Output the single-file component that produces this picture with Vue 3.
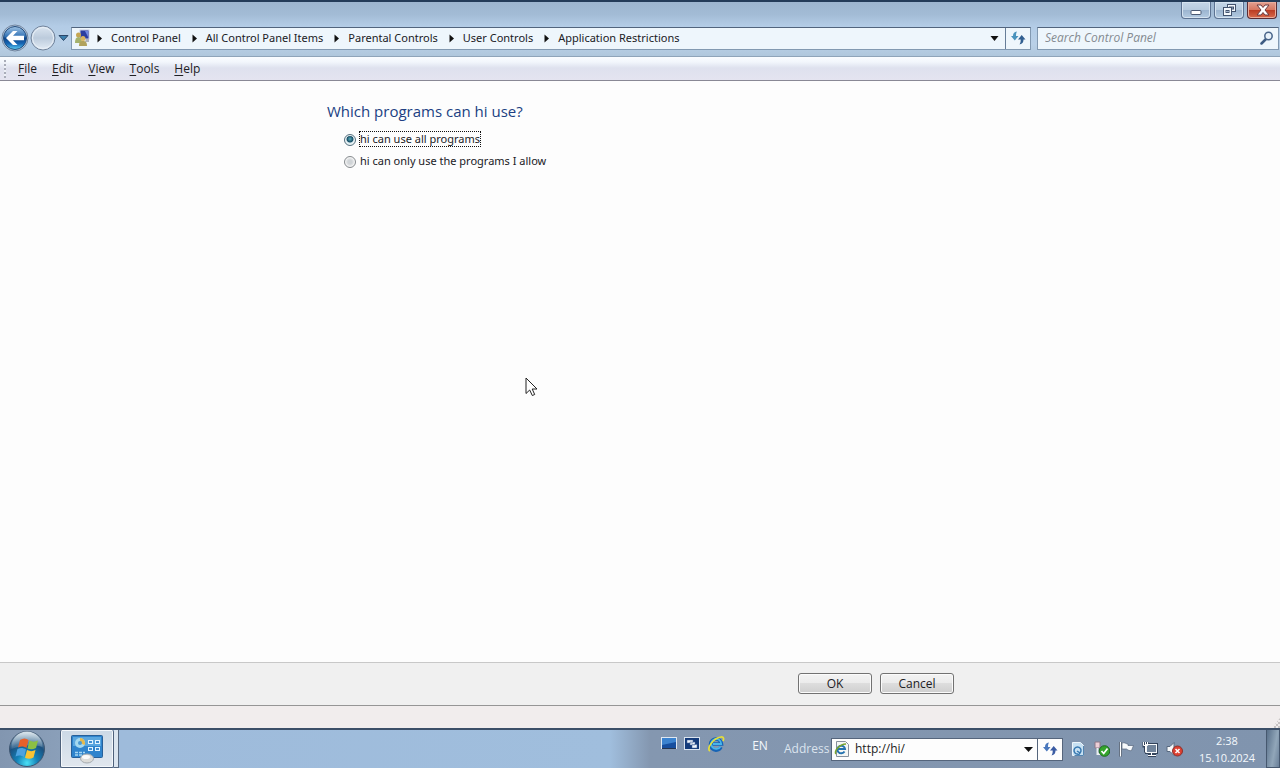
<script setup>
import { ref } from 'vue'

const crumbs = ['Control Panel', 'All Control Panel Items', 'Parental Controls', 'User Controls', 'Application Restrictions']
const menus = ['File', 'Edit', 'View', 'Tools', 'Help']
const access = ref('all')
const query = ref('')
const address = ref('http://hi/')
</script>

<template>
  <div class="screen">
    <header class="glass">
      <div class="caption">
        <button class="cap" aria-label="Minimize">
          <svg width="28" height="16" viewBox="0 0 28 16"><rect x="9" y="8.5" width="10" height="4" rx="1" fill="#fff" stroke="#4b5a74" /></svg>
        </button>
        <button class="cap" aria-label="Restore">
          <svg width="28" height="16" viewBox="0 0 28 16" fill="#f4f8fc" stroke="#43536e">
            <rect x="12.5" y="2.5" width="8" height="7" /><rect x="14.5" y="5" width="4" height="2" fill="#9fb2cb" />
            <rect x="8.500" y="5.500" width="8" height="8" /><rect x="11" y="8.500" width="3" height="2" fill="#9fb2cb" />
          </svg>
        </button>
        <button class="cap close" aria-label="Close">
          <svg width="28" height="16" viewBox="0 0 28 16"><path d="M9 3h4l2 2.500 2-2.500h4l-4 5 4 5h-4l-2-2.500-2 2.500H9l4-5z" fill="#fff" stroke="#6b3a40" /></svg>
        </button>
      </div>
      <div class="nav">
        <div class="travel">
          <button class="plain" aria-label="Back">
            <svg width="28" height="28" viewBox="0 0 28 28">
              <defs>
                <linearGradient id="back" x1="0" y1="0" x2="0" y2="1"><stop offset="0" stop-color="#9fc3e4" /><stop offset=".45" stop-color="#2f70b4" /><stop offset=".5" stop-color="#0c4389" /><stop offset=".75" stop-color="#1768b6" /><stop offset="1" stop-color="#5fd0f5" /></linearGradient>
              </defs>
              <circle cx="14" cy="14" r="13" fill="#c3d4e6" stroke="#71859f" />
              <circle cx="14" cy="14" r="11.500" fill="url(#back)" stroke="#234c7c" />
              <path d="M5 14l7-7h4.500l-4.500 4.700H23v4.600H12L16.500 21H12z" fill="#fff" />
            </svg>
          </button>
          <button class="plain" aria-label="Forward">
            <svg width="28" height="28" viewBox="0 0 28 28">
              <defs>
                <linearGradient id="fwd" x1="0" y1="0" x2="0" y2="1"><stop offset="0" stop-color="#dce6f1" /><stop offset=".5" stop-color="#bccbdc" /><stop offset="1" stop-color="#e4edf6" /></linearGradient>
              </defs>
              <circle cx="14" cy="14" r="12" fill="url(#fwd)" stroke="#71839b" />
              <circle cx="14" cy="14" r="10.500" fill="none" stroke="#e9f0f7" />
            </svg>
          </button>
          <button class="plain recent" aria-label="Recent pages">
            <svg width="11" height="8" viewBox="0 0 11 8"><path d="M1 1.500h9L5.500 6.500z" fill="#3a7fae" stroke="#2b4668" /></svg>
          </button>
        </div>
        <div class="path">
          <svg class="place" width="18" height="18" viewBox="0 0 18 18">
            <rect x="6" y="1" width="9" height="9" fill="#2c3d9f" stroke="#c5cbe3" /><path d="M11 2h3v6z" fill="#7188e0" />
            <path d="M12 10h3v3h-4z" fill="#b0b3bd" />
            <circle cx="4.500" cy="6" r="2.500" fill="#c5a653" /><path d="M1 14c0-4 1-6 3.500-6S8 10 8 14z" fill="#a5b26c" />
            <circle cx="9" cy="9.500" r="2.500" fill="#d9b45f" /><path d="M5 17c0-4 1.500-5 4-5s4 1 4 5z" fill="#b1a35e" />
          </svg>
          <nav class="crumbs">
            <template v-for="c in crumbs" :key="c">
              <svg class="arrow" width="25" height="9" viewBox="0 0 25 9"><path d="M11.500 0.500l4.500 4-4.500 4z" fill="#111" /></svg>
              <a href="#">{{ c }}</a>
            </template>
          </nav>
          <button class="plain drop" aria-label="Previous locations">
            <svg width="9" height="5" viewBox="0 0 9 5"><path d="M0.500 0h8L4.500 5z" fill="#111" /></svg>
          </button>
          <button class="plain refresh" aria-label="Refresh">
            <svg width="16" height="16" viewBox="0 0 16 16" fill="#4a93bd"><path d="M7 1.500C4 2 3 3.500 3 6H1l3.800 4.500L8.500 6H6C6 4 6.200 3 7 1.500z" /><path d="M9.500 14.500c3.200-.8 4-2.500 4-5h2L11.700 5 8 9.500h2.700c0 2-.2 3.500-1.200 5z" fill="#315f91" /></svg>
          </button>
        </div>
        <div class="search">
          <input v-model="query" type="search" aria-label="Search Control Panel" placeholder="Search Control Panel">
          <svg width="14" height="14" viewBox="0 0 14 14" fill="none"><path d="M1.500 12.500l5-5" stroke="#3e5c83" stroke-width="2.500" stroke-linecap="round" /><circle cx="8.500" cy="5" r="3.700" fill="#e8f2fa" stroke="#49658a" stroke-width="1.500" /></svg>
        </div>
      </div>
    </header>

    <div class="menubar">
      <span class="grip"></span>
      <button v-for="m in menus" :key="m" class="plain"><u>{{ m[0] }}</u>{{ m.slice(1) }}</button>
    </div>

    <main class="content">
      <div class="column">
        <h1>Which programs can hi use?</h1>
        <div class="choice">
          <input id="all" v-model="access" type="radio" name="access" value="all">
          <label for="all" :class="{ focused: access === 'all' }">hi can use all programs</label>
        </div>
        <div class="choice">
          <input id="some" v-model="access" type="radio" name="access" value="some">
          <label for="some" :class="{ focused: access === 'some' }">hi can only use the programs I allow</label>
        </div>
      </div>
      <svg class="pointer" width="13" height="20" viewBox="0 0 13 20"><path d="M1 1v15.500l3.700-3.500 2.600 5.500 2.400-1-2.500-5.500H12z" fill="#fff" stroke="#222" /></svg>
    </main>

    <footer class="actions">
      <div class="column">
        <button class="push">OK</button>
        <button class="push">Cancel</button>
      </div>
    </footer>
    <div class="status"><span class="sizer"></span></div>

    <div class="taskbar">
      <button class="plain orb" aria-label="Start">
        <svg width="38" height="38" viewBox="0 0 38 38">
          <defs>
            <radialGradient id="orb" cx=".5" cy=".9" r=".85"><stop offset="0" stop-color="#4be0f5" /><stop offset=".35" stop-color="#1482b8" /><stop offset=".7" stop-color="#1b5180" /><stop offset="1" stop-color="#7f9bb4" /></radialGradient>
            <linearGradient id="shine" x1="0" y1="0" x2="0" y2="1"><stop offset="0" stop-color="#eef6fa" stop-opacity=".85" /><stop offset="1" stop-color="#a4bccb" stop-opacity=".2" /></linearGradient>
          </defs>
          <circle cx="19" cy="19" r="17.500" fill="url(#orb)" stroke="#3d5570" />
          <path d="M3.500 17a15.500 15.500 0 0 1 31 0c-8-3-22-2-31 2z" fill="url(#shine)" />
          <path d="M12 10c3-2 6-2 8.500 0L18.500 18c-3-2-5.500-2-8.500-.5z" fill="#e8602b" />
          <path d="M21.500 10.500c3 1.500 5.500 1.500 8.500 0L28 18c-3 1.500-5.500 1.500-8.500.5z" fill="#8cc044" />
          <path d="M9.500 19c3-1.500 5.500-1.500 8.500.5L16 27c-3-2-5.500-2-8.500-.5z" fill="#4da2e0" />
          <path d="M19 20c3 1.500 5.500 1.500 8.500 0L25.500 27.500c-3 1.500-5.500 1.500-8.500.3z" fill="#fac333" />
        </svg>
      </button>
      <button class="task" aria-label="Control Panel">
        <svg width="34" height="30" viewBox="0 0 34 30">
          <rect x="1.500" y="1.500" width="31" height="22" rx="1" fill="#2f84cd" stroke="#276099" />
          <rect x="3" y="3" width="28" height="9" fill="#5ba7df" />
          <circle cx="10" cy="9" r="5" fill="#a5d9ef" /><path d="M10 9V4a5 5 0 0 1 4.500 7z" fill="#e6b94b" /><circle cx="10" cy="9" r="2" fill="#4b99d1" />
          <path d="M5 18.500h10M5 21h7" stroke="#a7d7f3" stroke-width="1.500" stroke-dasharray="3 1" />
          <g fill="#408ed0" stroke="#e2f4ff"><rect x="18.500" y="6.500" width="4" height="3" /><rect x="25.500" y="6.500" width="4" height="3" /><rect x="18.500" y="13.500" width="4" height="3" /><rect x="25.500" y="13.500" width="4" height="3" /></g>
          <ellipse cx="17" cy="24.500" rx="6.500" ry="4.500" fill="#dcdcd9" stroke="#a3a9ae" /><ellipse cx="16" cy="23" rx="4" ry="2" fill="#fafafa" />
        </svg>
      </button>
      <span class="stack"></span>

      <div class="launch">
        <button class="plain" aria-label="Show desktop">
          <svg width="16" height="16" viewBox="0 0 16 16"><rect x=".5" y="1.500" width="15" height="11" fill="#174f9f" stroke="#dfe8f2" /><path d="M1 2h14v4L1 9z" fill="#3c83cf" /><path d="M1 12.500h14" stroke="#253650" /></svg>
        </button>
        <button class="plain" aria-label="Switch windows">
          <svg width="16" height="16" viewBox="0 0 16 16"><rect x=".5" y="1.500" width="15" height="12" fill="#143b7a" stroke="#dae4ef" /><path d="M3 4h6v3H3zM6 6h5v3H6zM8 8.500h5V12H8z" fill="#f1f6fb" stroke="#46679a" stroke-width=".5" /></svg>
        </button>
        <button class="plain" aria-label="Internet Explorer">
          <svg width="18" height="16" viewBox="0 0 18 16" fill="none"><path d="M14 11A5.500 5.500 0 1 1 14.500 8H5" stroke="#1764b5" stroke-width="3.500" /><path d="M13.500 10.500A5 5 0 1 1 14.200 8H6" stroke="#48b5ea" stroke-width="1.800" /><path d="M3 15C-1 13 6 2 14 1c3-.3 3 2 2 4" stroke="#e6df38" stroke-width="1.700" /></svg>
        </button>
      </div>
      <button class="plain lang">EN</button>
      <label class="addrlabel" for="address">Address</label>
      <div class="address">
        <svg width="16" height="16" viewBox="0 0 16 16" fill="none"><path d="M2.500.5h9l3 3v12h-12z" fill="#f5f7f5" stroke="#87919d" /><path d="M10.500 10.500A3.800 3.800 0 1 1 11 8H4" stroke="#2472b0" stroke-width="2" /><path d="M2 13C-.5 11 5 3 12 3" stroke="#79a52e" stroke-width="1.500" /></svg>
        <input id="address" v-model="address" type="text">
        <button class="plain down" aria-label="Show addresses"><svg width="9" height="5" viewBox="0 0 9 5"><path d="M0 0h9L4.500 5z" fill="#111" /></svg></button>
        <button class="plain go" aria-label="Go">
          <svg width="16" height="16" viewBox="0 0 16 16" fill="#4a78bd"><path d="M7 1.500C4 2 3 3.500 3 6H1l3.800 4.500L8.500 6H6C6 4 6.200 3 7 1.500z" /><path d="M9.500 14.500c3.200-.8 4-2.500 4-5h2L11.700 5 8 9.500h2.700c0 2-.2 3.500-1.200 5z" fill="#3a5ba3" /></svg>
        </button>
      </div>
      <div class="tray">
        <svg width="16" height="16" viewBox="0 0 16 16"><path d="M2.500 1.500h8l3 3v10h-11z" fill="#c7e1f3" stroke="#edf5fb" /><path d="M10 12a3.500 3.500 0 1 0-2 1M7 10l3 2-2 2.500" fill="none" stroke="#3979b1" stroke-width="1.500" /><path d="M13.500 5v9.500h-9" fill="none" stroke="#5585b0" /></svg>
        <svg width="16" height="16" viewBox="0 0 16 16"><path d="M1 1h5v6H1z" fill="#edcfd7" stroke="#8b7888" /><path d="M3.500 7v6h5" fill="none" stroke="#e9edf0" stroke-width="2" /><circle cx="10.500" cy="10" r="5.300" fill="#34a52c" stroke="#1f6c22" /><path d="M7.500 10l2.200 2.500L13.500 7.500" fill="none" stroke="#fff" stroke-width="1.700" /></svg>
        <svg width="16" height="16" viewBox="0 0 16 16"><path d="M2.500 1v14.500" stroke="#34445a" stroke-width="3" /><path d="M2.500 1v14.500" stroke="#fff" stroke-width="1.500" /><path d="M4 2c3-1 4 1 6 1v1.500h5.500l-2 5c-2 1-4-1-5-1.500H4z" fill="#f6f9fb" stroke="#56667c" stroke-width=".7" /></svg>
        <svg width="16" height="16" viewBox="0 0 16 16" fill="none"><rect x="4.500" y="3.500" width="10" height="8" stroke="#33435a" stroke-width="3" /><path d="M9.500 12v2M6 14.500h8M2 1v4h3V1M3.500 5v6.500" stroke="#33435a" stroke-width="3" /><rect x="4.500" y="3.500" width="10" height="8" fill="#71849b" stroke="#f6f9fb" /><path d="M9.500 12v2M6 14.500h8M1.500 1v3.500h4V1M3.500 1v10.500" stroke="#fff" /></svg>
        <svg width="18" height="16" viewBox="0 0 18 16"><path d="M1 5.500h3l4-4v13l-4-4H1z" fill="#f7f9fb" stroke="#596a80" /><circle cx="11.500" cy="10" r="5" fill="#dd4031" stroke="#8e302b" /><path d="M9.500 8l4 4M13.500 8l-4 4" stroke="#fff" stroke-width="1.500" /></svg>
      </div>
      <button class="plain clock"><span>2:38</span><span>15.10.2024</span></button>
      <button class="peek" aria-label="Show desktop"></button>
    </div>
  </div>
</template>

<style>
body { margin: 0; }
</style>

<style scoped>
* { box-sizing: border-box; }
.screen { display: flex; flex-direction: column; min-height: 100vh; background: #fdfdfd; color: #202024; font: 12px/16px "Open Sans", "Noto Sans", sans-serif; }
button, input { font: inherit; color: inherit; }
svg { display: block; flex: none; }
.plain { border: 0; padding: 0; background: none; display: flex; align-items: center; justify-content: center; }
.column { width: 100%; max-width: 628px; margin: 0 auto; padding-left: 1px; }

.glass { border-top: 2px solid #243c59; background: linear-gradient(#9db5cf 0, #a2bbd5 12px, #b3cce6 24px, #b9d0e7 42px, #b0c7dc 100%); height: 57px; border-bottom: 1px solid #8fa4b9; }
.caption { display: flex; justify-content: flex-end; gap: 3px; height: 17px; padding-right: 3px; }
.cap { width: 30px; padding: 0; border: 1px solid #5c7292; border-top: 0; border-radius: 0 0 4px 4px; background: linear-gradient(#c5d6e8 0, #b6cade 50%, #9bb4cf 50%, #b4cbe2 100%); box-shadow: inset 0 0 0 1px #d5e3f0; display: flex; justify-content: center; }
.close { border-color: #592c35; background: linear-gradient(#e2a091 0, #d5745e 50%, #b93a22 50%, #d96a4c 100%); box-shadow: inset 0 0 0 1px #e9ad9d; }
.nav { display: flex; align-items: center; height: 30px; margin-top: 4px; padding: 0 1px; }
.travel { display: flex; align-items: center; width: 70px; }
.recent { width: 12px; }
.path { display: flex; align-items: center; flex: 1; height: 23px; border: 1px solid #8299b1; border-top-color: #51647d; background: #eef6fc; min-width: 0; }
.place { margin-left: 2px; }
.crumbs { display: flex; align-items: center; flex: 1; white-space: nowrap; margin-left: -6px; font-family: "Noto Sans", sans-serif; font-size: 11px; }
.crumbs a { color: inherit; text-decoration: none; }
.drop { width: 22px; height: 100%; }
.refresh { width: 25px; height: 100%; border-left: 1px solid #667d98; }
.search { display: flex; align-items: center; width: 242px; height: 23px; margin-left: 6px; padding: 0 4px 0 7px; border: 1px solid #8299b1; border-top-color: #51647d; background: #eef6fc; }
.search input { flex: 1; min-width: 0; padding: 0; border: 0; outline: 0; background: none; font-style: italic; appearance: none; }
.search input::placeholder { color: #858b91; opacity: 1; }

.menubar { display: flex; align-items: center; height: 24px; padding-left: 4px; gap: 15px; border-bottom: 1px solid #898895; background: linear-gradient(#fbfdff 0, #f2f6fc 5px, #dee1ee 11px, #e4e4f0 100%); }
.menubar .plain { height: 22px; }
.menubar u { text-underline-offset: 2px; }
.grip { width: 2px; height: 18px; margin-right: -3px; background: repeating-linear-gradient(#a9adb9 0 2px, #eef1f7 2px 4px); }

.content { position: relative; flex: 1; padding-top: 20px; }
h1 { margin: 0 0 9px; font-size: 15px; line-height: 20px; font-weight: 400; color: #203f82; }
.choice { display: flex; align-items: center; height: 18px; margin: 0 0 4px 17px; }
.choice input { appearance: none; width: 12px; height: 12px; margin: 1px 3px 0 0; border: 1px solid #858a8e; border-radius: 50%; background: radial-gradient(circle, #d0d4d7 0 2px, #f4f4f4 5px); box-shadow: inset 0 0 0 1px #f4f4f4; }
.choice input:checked { border-color: #54707f; background: radial-gradient(circle at 5px 4px, #5eaebd 0, #164d65 3px, #dceef3 4px); }
.choice label { border: 1px solid transparent; font-family: "Noto Sans", sans-serif; font-size: 11px; line-height: 14px; }
.choice label.focused { border: 1px dotted #111; }
.pointer { position: absolute; left: 41%; top: 51%; }

.actions { height: 44px; border-top: 1px solid #c8c8c8; border-bottom: 1px solid #969696; background: #f0f0f0; }
.actions .column { display: flex; justify-content: flex-end; gap: 8px; padding-top: 10px; }
.push { width: 74px; height: 21px; padding: 0; border: 1px solid #727272; border-radius: 3px; background: linear-gradient(#f3f3f3 0, #ebebeb 50%, #dddddd 50%, #cfcfcf 100%); box-shadow: inset 0 0 0 1px #fbfbfb; line-height: 16px; }
.status { display: flex; justify-content: flex-end; align-items: flex-end; height: 22px; background: #f1eded; }
.sizer { width: 8px; height: 10px; background: repeating-conic-gradient(#c7c3c3 0 25%, #f1eded 0 50%) 0 0 / 4px 4px; clip-path: polygon(100% 0, 100% 100%, 0 100%); }

.taskbar { display: flex; align-items: center; height: 40px; border-top: 2px solid #3c4f68; color: #f4f8fc; background: linear-gradient(90deg, #8296b0 0, #8a9fb9 60px, #9ebbdb 120px, #a0bedd 610px, #8497b0 650px, #8094ae 100%); }
.orb { width: 54px; }
.task { display: flex; align-items: center; justify-content: center; width: 54px; height: 38px; margin-left: 6px; padding: 0; border: 1px solid #4e617b; border-top: 0; border-radius: 2px; background: linear-gradient(#ccd9e6, #e1e7ee); box-shadow: inset 0 0 0 1px #f3f7fb; }
.stack { width: 5px; height: 38px; border: 1px solid #55677f; border-left: 0; border-top: 0; background: #dbe5ef; }
.launch { display: flex; align-items: center; gap: 7px; height: 16px; margin: 0 26px 10px auto; }
.lang { width: 18px; margin: 0 15px 6px 0; }
.addrlabel { color: #dbe4ee; width: 47px; white-space: nowrap; }
.address { display: flex; align-items: center; width: 232px; height: 23px; border: 1px solid #55657c; background: #fdfdfd; color: #222; }
.address > svg { margin: 0 5px 0 2px; }
.address input { flex: 1; min-width: 0; padding: 0; border: 0; outline: 0; background: none; }
.down { width: 18px; height: 100%; }
.go { width: 25px; height: 100%; border-left: 1px solid #55657c; }
.tray { display: flex; align-items: center; gap: 8px; margin-left: 7px; }
.clock { flex-direction: column; width: 60px; margin: 0 9px 0 13px; font-size: 11px; line-height: 17px; }
.peek { width: 14px; height: 38px; padding: 0; border: 1px solid #46586f; border-top: 0; background: linear-gradient(100deg, #59708a, #91a6b9 60%, #697f98); }
</style>
